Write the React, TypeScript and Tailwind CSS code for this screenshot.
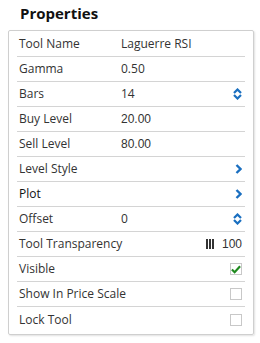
import React from "react";

const font = { fontFamily: '"Open Sans", sans-serif' };

function Spinner() {
  return (
    <svg width="9" height="12" viewBox="0 0 9 12" className="text-[#1a6fc0]">
      <path d="M1 5 L4.5 1.5 L8 5" fill="none" stroke="currentColor" strokeWidth="2.2" />
      <path d="M1 7 L4.5 10.5 L8 7" fill="none" stroke="currentColor" strokeWidth="2.2" />
    </svg>
  );
}

function Chevron() {
  return (
    <svg width="7" height="10" viewBox="0 0 7 10" className="text-[#1a6fc0]">
      <path d="M1.5 1 L5.5 5 L1.5 9" fill="none" stroke="currentColor" strokeWidth="2.4" />
    </svg>
  );
}

function Check({ on }: { on?: boolean }) {
  return (
    <div className="w-[12px] h-[12px] border border-[#c8c8c8] bg-white flex items-center justify-center">
      {on && (
        <svg width="11" height="9" viewBox="0 0 11 9">
          <path d="M1 4.5 L4 7.5 L10 1" fill="none" stroke="#1f8a1f" strokeWidth="2.4" />
        </svg>
      )}
    </div>
  );
}

type Row = { label: string; value?: string; num?: boolean; right?: React.ReactNode; dark?: boolean };

const rows: Row[] = [
  { label: "Tool Name", value: "Laguerre RSI" },
  { label: "Gamma", value: "0.50" },
  { label: "Bars", value: "14", right: <Spinner /> },
  { label: "Buy Level", value: "20.00", num: true },
  { label: "Sell Level", value: "80.00", num: true },
  { label: "Level Style", right: <Chevron /> },
  { label: "Plot", right: <Chevron />, dark: true },
  { label: "Offset", value: "0", right: <Spinner /> },
  {
    label: "Tool Transparency",
    right: (
      <div className="flex items-center gap-[8px]">
        <div className="flex gap-[1px] h-[10px]">
          <span className="w-[2px] bg-[#333]" />
          <span className="w-[2px] bg-[#333]" />
          <span className="w-[2px] bg-[#333]" />
        </div>
        <span className="text-[12px] text-[#333]" style={{ fontFamily: '"Liberation Sans", Arial, sans-serif' }}>
          100
        </span>
      </div>
    ),
  },
  { label: "Visible", right: <Check on /> },
  { label: "Show In Price Scale", right: <Check /> },
  { label: "Lock Tool", right: <Check /> },
];

export default function App() {
  return (
    <div className="w-[260px] h-[343px] bg-white" style={font}>
      <div className="pl-[20px] pt-[2px] h-[30px] text-[15px] font-bold text-[#111]">Properties</div>
      <div className="ml-[8px] w-[246px] border border-[#cfcfcf] rounded-[2px] px-[8px] pt-[1px] pb-[2px] shadow-[1px_1px_2px_rgba(0,0,0,0.12)]">
        {rows.map((r, i) => (
          <div
            key={r.label}
            className={`h-[25px] flex items-center text-[12px] ${i < rows.length - 1 ? "border-b border-[#d4d4d4]" : ""}`}
          >
            <div className={`w-[104px] shrink-0 pl-[2px] whitespace-nowrap ${r.dark ? "text-[#111]" : "text-[#333]"}`}>
              {r.label}
            </div>
            <div
              className="flex-1 text-[#333] whitespace-nowrap"
              style={r.num ? { fontFamily: '"Liberation Sans", Arial, sans-serif' } : undefined}
            >
              {r.value}
            </div>
            {r.right && <div className="pr-[3px] flex items-center">{r.right}</div>}
          </div>
        ))}
      </div>
    </div>
  );
}
